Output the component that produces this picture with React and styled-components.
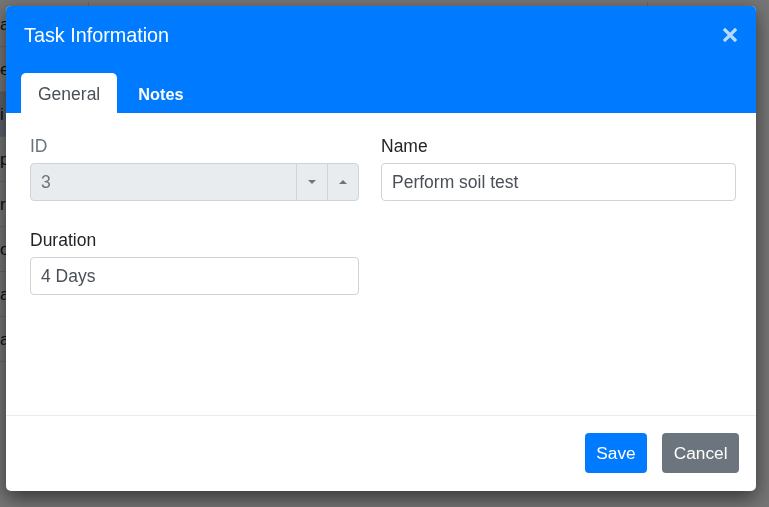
import React from 'react';
import styled, { createGlobalStyle } from 'styled-components';

const GlobalStyle = createGlobalStyle`
  html, body {
    margin: 0;
    padding: 0;
    height: 100%;
    overflow: hidden;
    background: #fff;
    font-family: "Liberation Sans", Arial, sans-serif;
  }
`

const Page = styled.div`
  width: 769px;
  height: 507px;
  display: grid;
  grid-template-columns: 89px 559px 121px;
  grid-auto-rows: 45px;
  align-content: start;
  padding-top: 2px;
`

const Cell = styled.div`
  border-bottom: ${props => props.first ? '1px solid #dee2e6' : 'none'};
  border-right: ${props => props.last ? 'none' : '1px solid #dee2e6'};
  background: ${props => props.active ? '#c9d6e6' : 'transparent'};
  font-size: 17px;
  color: #212529;
  line-height: 45px;
  overflow: hidden;
  white-space: nowrap;
`

const Overlay = styled.div`
  position: fixed;
  inset: 0;
  background: rgba(0, 0, 0, 0.54);
`

const Modal = styled.div`
  position: fixed;
  top: 6px;
  left: 6px;
  width: 750px;
  height: 485px;
  display: flex;
  flex-direction: column;
  background: #fff;
  border-radius: 5px;
  overflow: hidden;
  box-shadow: 0 7px 20px rgba(0, 0, 0, 0.55);
  font-size: 17.5px;
  color: #212529;
`

const Header = styled.div`
  background: #007bff;
  display: flex;
  flex-direction: column;
  gap: 26px;
  padding: 17px 0 0 0;
`

const TitleRow = styled.div`
  display: flex;
  justify-content: space-between;
  align-items: center;
  padding: 0 18px;
  height: 24px;
`

const Title = styled.div`
  color: #fff;
  font-size: 19.8px;
  line-height: 24px;
`

const Close = styled.button`
  background: transparent;
  border: none;
  padding: 0;
  width: 16px;
  height: 16px;
  display: flex;
  align-items: center;
  justify-content: center;
  opacity: 0.72;
`

const Tabs = styled.div`
  display: flex;
  padding-left: 15px;
  height: 40px;
`

const Tab = styled.div`
  padding: 0 17px;
  line-height: 42px;
  border-radius: 5px 5px 0 0;
  background: ${props => props.active ? '#fff' : 'transparent'};
  color: ${props => props.active ? '#495057' : '#fff'};
  font-weight: ${props => props.active ? 'normal' : 'bold'};
  font-size: ${props => props.active ? '17.5px' : '16.3px'};
  margin-right: 4px;
`

const Body = styled.div`
  flex: 1;
  display: grid;
  grid-template-columns: 329px 355px;
  column-gap: 22px;
  row-gap: 27px;
  align-content: start;
  padding: 21px 24px 0 24px;
`

const Field = styled.div`
  display: flex;
  flex-direction: column;
  gap: 5px;
`

const Label = styled.label`
  line-height: 24px;
  color: ${props => props.muted ? '#6c757d' : '#212529'};
`

const InputBox = styled.div`
  height: 38px;
  box-sizing: border-box;
  border: 1px solid #ced4da;
  border-radius: 4px;
  background: ${props => props.disabled ? '#e9ecef' : '#fff'};
  display: flex;
  align-items: stretch;
`

const Value = styled.div`
  flex: 1;
  padding: 0 10px;
  line-height: 36px;
  color: ${props => props.disabled ? '#6c757d' : '#495057'};
`

const Spin = styled.div`
  width: 30px;
  border-left: 1px solid #ced4da;
  display: flex;
  align-items: center;
  justify-content: center;
`

const Arrow = styled.div`
  width: 0;
  height: 0;
  border-left: 4.5px solid transparent;
  border-right: 4.5px solid transparent;
  border-top: ${props => props.up ? 'none' : '4.5px solid #6c757d'};
  border-bottom: ${props => props.up ? '4.5px solid #6c757d' : 'none'};
`

const Footer = styled.div`
  border-top: 1px solid #e9ecef;
  display: flex;
  justify-content: flex-end;
  gap: 15px;
  padding: 17px 17px 18px 0;
`

const Button = styled.button`
  font-family: inherit;
  font-size: 17.3px;
  line-height: 24px;
  padding: 8px 11.5px;
  border: none;
  border-radius: 4px;
  color: #fff;
  background: ${props => props.secondary ? '#6c757d' : '#007bff'};
`

const rows = ['a', 'e', 'i', 'p', 'r', 'o', 'a', 'a']

const App = () => {
  return (
    <>
      <GlobalStyle />
      <Page>
        {rows.map((letter, index) => (
          <React.Fragment key={index}>
            <Cell first active={index === 2}>{letter}</Cell>
            <Cell></Cell>
            <Cell last></Cell>
          </React.Fragment>
        ))}
      </Page>
      <Overlay />
      <Modal>
        <Header>
          <TitleRow>
            <Title>Task Information</Title>
            <Close>
              <svg width="14" height="14" viewBox="0 0 14 14">
                <path d="M2 2 L12 12 M12 2 L2 12" stroke="#fff" strokeWidth="3.2" strokeLinecap="square" />
              </svg>
            </Close>
          </TitleRow>
          <Tabs>
            <Tab active>General</Tab>
            <Tab>Notes</Tab>
          </Tabs>
        </Header>
        <Body>
          <Field>
            <Label muted>ID</Label>
            <InputBox disabled>
              <Value disabled>3</Value>
              <Spin><Arrow /></Spin>
              <Spin><Arrow up /></Spin>
            </InputBox>
          </Field>
          <Field>
            <Label>Name</Label>
            <InputBox>
              <Value>Perform soil test</Value>
            </InputBox>
          </Field>
          <Field>
            <Label>Duration</Label>
            <InputBox>
              <Value>4 Days</Value>
            </InputBox>
          </Field>
        </Body>
        <Footer>
          <Button>Save</Button>
          <Button secondary>Cancel</Button>
        </Footer>
      </Modal>
    </>
  )
}

export default App;
